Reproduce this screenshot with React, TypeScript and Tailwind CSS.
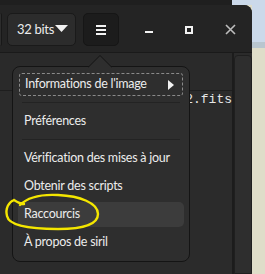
const font = { fontFamily: 'Lato, "Noto Sans", sans-serif' };

const items = [
  { label: "Vérification des mises à jour" },
  { label: "Obtenir des scripts" },
  { label: "Raccourcis", hover: true },
  { label: "À propos de siril" },
];

function Row({ label, hover }: { label: string; hover?: boolean }) {
  return (
    <div
      className={`flex h-[25px] items-center whitespace-nowrap rounded-[5px] pl-[6px] text-[12.5px] tracking-[-0.25px] text-[#ececec] ${
        hover ? "bg-[#3c3c3c]" : ""
      }`}
    >
      {label}
    </div>
  );
}

export default function App() {
  return (
    <div
      className="relative flex h-[274px] w-[265px] overflow-hidden bg-[#dfddc9]"
      style={font}
    >
      {/* window */}
      <div className="flex w-[252px] flex-col">
        <div className="flex h-[5px]">
          <div className="w-[232px] bg-[#1f1f1f]" />
          <div className="flex-1 bg-[#cbd9ea]" />
        </div>
        <div className="flex flex-1 flex-col overflow-hidden rounded-tr-[8px] bg-[#2b2b2b]">
          {/* header bar */}
          <header className="flex h-[48px] shrink-0 items-start border-b border-[#1a1a1a] bg-[#242424] pt-[8px]">
            <div className="h-[33px] w-[2px] rounded-r-[4px] border-r border-[#181818] bg-[#2c2c2c]" />
            <button className="ml-[5px] flex h-[33px] w-[69px] items-center whitespace-nowrap rounded-[5px] border border-[#1a1a1a] bg-[#2c2c2c] pl-[9px] text-[13px] tracking-[-0.3px] text-[#ececec]">
              32 bits
              <svg width="13" height="7" viewBox="0 0 13 7" className="ml-[1px] mt-[-2px]">
                <path d="M0 0H13L6.5 7Z" fill="#f2f2f2" />
              </svg>
            </button>
            <button className="ml-[7px] flex h-[33px] w-[36px] items-center justify-center rounded-[5px] border border-[#161616] bg-[#1c1c1c]">
              <svg width="10" height="10" viewBox="0 0 10 10">
                <rect x="0" y="0" width="10" height="2" fill="#f2f2f2" />
                <rect x="0" y="4" width="10" height="2" fill="#f2f2f2" />
                <rect x="0" y="8" width="10" height="2" fill="#f2f2f2" />
              </svg>
            </button>
            <div className="ml-[18px] mt-[5px] flex items-start gap-[16px]">
              <svg width="24" height="24" viewBox="0 0 24 24">
                <rect x="8" y="13" width="8" height="2" fill="#f2f2f2" />
              </svg>
              <svg width="24" height="24" viewBox="0 0 24 24">
                <rect x="9" y="9" width="6" height="6" fill="none" stroke="#f2f2f2" strokeWidth="2" />
              </svg>
            </div>
            <svg width="24" height="24" viewBox="0 0 24 24" className="ml-[17px] mt-[5px]">
              <path d="M8 7L17 16M17 7L8 16" stroke="#bdbdbd" strokeWidth="1.6" />
            </svg>
          </header>

          {/* body */}
          <div className="flex flex-1">
            <div className="flex w-[232px] flex-col">
              <div className="h-[38px] border-b border-[#1e1e1e] bg-[#2a2a2a]" />
              <div
                className="mt-[1px] overflow-hidden whitespace-nowrap text-right text-[13px] leading-[16px] text-[#e6e6e6]"
                style={{ fontFamily: '"Liberation Mono", monospace' }}
              >
                r_pp_light_00002.fits
              </div>
            </div>
            <div className="w-[2px] bg-[#1c1c1c]" />
            <div className="mt-[2px] flex-1 rounded-t-[4px] border border-[#1f1f1f] bg-[#2e2e2e]" />
          </div>
        </div>
      </div>

      {/* desktop strip */}
      <div className="flex flex-1 flex-col">
        <div className="h-[42px] bg-[#cbd9ea]" />
        <div className="h-[6px] bg-[#b9c6cf]" />
        <div className="flex-1 bg-[#dfddc9]" />
      </div>

      {/* popover menu */}
      <div className="absolute left-[12px] top-[66px] flex h-[196px] w-[178px] flex-col rounded-[8px] border border-[#141414] bg-[#2e2e2e] px-[5px] py-[5px]">
        <div className="flex h-[25px] items-center rounded-[3px] px-[1px]">
          <div className="flex h-[23px] flex-1 items-center justify-between whitespace-nowrap rounded-[3px] border border-dashed border-[#8a8a8a] pl-[5px] pr-[8px] text-[12.5px] tracking-[-0.25px] text-[#ececec]">
            Informations de l'image
            <svg width="6" height="10" viewBox="0 0 6 10">
              <path d="M0 0L6 5L0 10Z" fill="#f2f2f2" />
            </svg>
          </div>
        </div>
        <div className="mx-[4px] my-[5px] h-px bg-[#232323]" />
        <div className="mt-[1px]">
          <Row label="Préférences" />
        </div>
        <div className="mx-[4px] my-[5px] h-px bg-[#232323]" />
        <div className="mt-[1px] flex flex-col gap-[3px]">
          {items.map((it) => (
            <Row key={it.label} label={it.label} hover={it.hover} />
          ))}
        </div>
      </div>
      <svg className="absolute left-[88px] top-[55px]" width="24" height="13" viewBox="0 0 24 13">
        <path d="M0 12.5L12 0.5L24 12.5" fill="#2e2e2e" stroke="#141414" strokeWidth="1" />
      </svg>

      {/* yellow annotation */}
      <svg className="pointer-events-none absolute left-0 top-0" width="265" height="274" viewBox="0 0 265 274">
        <path
          d="M20 205 C28 197 40 194 58 195 C80 196 98 203 98 214 C98 224 86 229 58 229 C32 229 9 226 7 216 C5 208 9 202 14 200 M14 200 C17 202 20 204 24 204"
          fill="none"
          stroke="#f4e600"
          strokeWidth="2.4"
          strokeLinecap="round"
        />
      </svg>
    </div>
  );
}
